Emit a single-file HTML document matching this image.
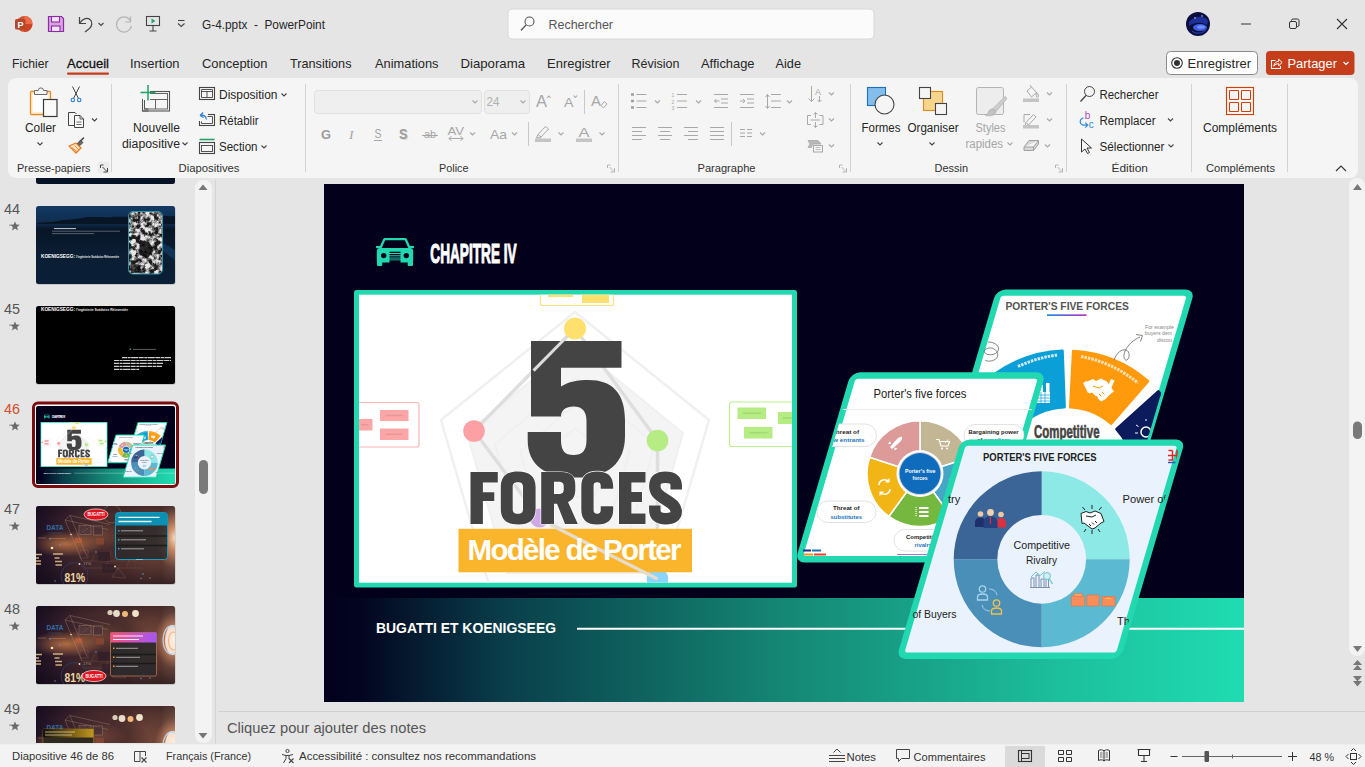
<!DOCTYPE html>
<html lang="fr"><head><meta charset="utf-8"><title>G-4.pptx - PowerPoint</title>
<style>
html,body{margin:0;padding:0;background:#e5e5e5;overflow:hidden}
body{width:1365px;height:767px;position:relative;font-family:"Liberation Sans",sans-serif}
svg{position:absolute;left:0;top:0;display:block}
text{font-family:"Liberation Sans",sans-serif;fill:#262626;font-size:12px}
.g{fill:#a6a6a6}
.lbl{font-size:11.5px;fill:#333}
.ic{fill:none;stroke:#444;stroke-width:1}
.icg{fill:none;stroke:#a8a8a8;stroke-width:1}
.chev{fill:none;stroke:#444;stroke-width:1.1}
.chevg{fill:none;stroke:#a8a8a8;stroke-width:1.1}
.div{stroke:#d2d2d2;stroke-width:1}
</style></head><body>
<svg width="1365" height="767" viewBox="0 0 1365 767">
<!-- chrome_bg -->
<rect x="0" y="0" width="1365" height="767" fill="#e5e5e5"/>
<!-- ribbon card -->
<rect x="8" y="78" width="1350" height="100" rx="8" ry="8" fill="#f5f5f5"/>
<!-- search box -->
<rect x="508" y="9" width="366" height="30" rx="4" fill="#fbfbfb" stroke="#d8d8d8" stroke-width="1"/>
<!-- left scrollbar track -->
<rect x="195" y="180" width="17" height="563" rx="8" fill="#f3f3f3"/>
<line x1="215.5" y1="180" x2="215.5" y2="745" stroke="#d4d4d4"/>
<!-- right scrollbar track -->
<rect x="1349" y="178" width="16" height="478" rx="8" fill="#f3f3f3"/>
<!-- notes separator -->
<line x1="218" y1="711.5" x2="1365" y2="711.5" stroke="#d0d0d0"/>
<!-- status bar -->
<rect x="0" y="744.300" width="1365" height="23" fill="#f3f3f3"/>

<!-- titlebar -->
<g id="titlebar">
<!-- powerpoint logo -->
<circle cx="24.5" cy="24" r="8" fill="#d35230"/>
<path d="M24.5 16 a8 8 0 0 1 8 8 h-8z" fill="#ed6c47"/>
<path d="M24.5 32 a8 8 0 0 0 8 -8 h-8z" fill="#c43e1c" opacity=".6"/>
<rect x="15" y="19" width="10.5" height="10.5" rx="1.5" fill="#b7472a"/>
<text x="17.6" y="28" style="font-size:9px;font-weight:bold;fill:#fff">P</text>
<!-- save -->
<path d="M48.5 16.5h13l2 2v13h-15z" fill="#d9a3e2" stroke="#8a2da5" stroke-width="1.2"/>
<rect x="51.5" y="16.5" width="8" height="5.5" fill="#f3e3f6" stroke="#8a2da5" stroke-width="1.1"/>
<rect x="51.5" y="26" width="8.5" height="5.5" fill="#f3e3f6" stroke="#8a2da5" stroke-width="1.1"/>
<!-- undo -->
<path d="M79.5 17v6.5h6.5" fill="none" stroke="#444" stroke-width="1.2"/>
<path d="M80 23c2-4 7-6 10-3.5c3 2.500 2 7-0.500 9l-4.500 3.500" fill="none" stroke="#444" stroke-width="1.2"/>
<path class="chev" d="M98.500 23l2.500 2.500 2.500-2.500"/>
<!-- redo (disabled) -->
<path d="M130.500 16.500v5.500h-5.500" fill="none" stroke="#b4b4b4" stroke-width="1.200"/>
<path d="M130.800 21.300A7.500 7.500 0 1 0 131.400 25.800" fill="none" stroke="#b4b4b4" stroke-width="1.200"/>
<!-- present -->
<rect x="146.500" y="16.500" width="13" height="9" fill="none" stroke="#444" stroke-width="1.1"/>
<path d="M151.500 18.500l4 2.500-4 2.500z" fill="#21a366"/>
<path d="M153 25.500v5.500M149.500 31h7" stroke="#444" stroke-width="1.1" fill="none"/>
<!-- customise -->
<path d="M178 20.500h6.500" stroke="#444" stroke-width="1.1"/>
<path class="chev" d="M178 23.500l3.250 3 3.250-3"/>
<text x="202" y="29" textLength="123" lengthAdjust="spacingAndGlyphs" style="white-space:pre;font-size:12.5px">G-4.pptx  -  PowerPoint</text>
<!-- search -->
<circle cx="529.500" cy="21.500" r="4.500" fill="none" stroke="#555" stroke-width="1.1"/>
<path d="M526 25l-5 5.500" stroke="#555" stroke-width="1.2"/>
<text x="548.500" y="28.500" textLength="64.500" lengthAdjust="spacingAndGlyphs" style="fill:#555;font-size:12.500px">Rechercher</text>
<!-- avatar -->
<circle cx="1198" cy="24" r="12" fill="#0b0f3c"/>
<path d="M1189 22c4-5 12-7 18-3c1 2 1 4 0 6c-5-3-12-3-18 1z" fill="#1c2f9a"/>
<ellipse cx="1200" cy="27.500" rx="7" ry="3.500" fill="#3d5fe0"/>
<ellipse cx="1201" cy="27" rx="4" ry="1.800" fill="#6f8cff"/>
<path d="M1192 31c3 3 10 3 14-1" stroke="#24349d" stroke-width="1.500" fill="none"/>
<circle cx="1195" cy="18" r=".8" fill="#cfd8ff"/><circle cx="1202" cy="16" r=".8" fill="#cfd8ff"/>
<!-- window controls -->
<path d="M1241 24h10" stroke="#333" stroke-width="1"/>
<rect x="1289.500" y="21.500" width="7" height="7" rx="1.500" fill="none" stroke="#333" stroke-width="1"/>
<path d="M1291.500 21.500v-1a1.500 1.500 0 0 1 1.500-1.500h4.500a1.500 1.500 0 0 1 1.500 1.500v4.500a1.500 1.500 0 0 1-1.500 1.500h-1" fill="none" stroke="#333" stroke-width="1"/>
<path d="M1337 19l10 10M1347 19l-10 10" stroke="#333" stroke-width="1.100"/>
</g>

<!-- tabs -->
<g id="tabs" style="font-size:13px">
<text x="12" y="67.700" textLength="36.500" lengthAdjust="spacingAndGlyphs" style="font-size:13px">Fichier</text>
<text x="67" y="67.700" textLength="42" lengthAdjust="spacingAndGlyphs" style="font-size:13px;fill:#111;stroke:#111;stroke-width:.3">Accueil</text>
<rect x="67" y="72.500" width="42" height="2.200" rx="1" fill="#c43e1c"/>
<text x="130" y="67.700" textLength="49.500" lengthAdjust="spacingAndGlyphs" style="font-size:13px">Insertion</text>
<text x="202" y="67.700" textLength="65.500" lengthAdjust="spacingAndGlyphs" style="font-size:13px">Conception</text>
<text x="290" y="67.700" textLength="61.500" lengthAdjust="spacingAndGlyphs" style="font-size:13px">Transitions</text>
<text x="375" y="67.700" textLength="63.500" lengthAdjust="spacingAndGlyphs" style="font-size:13px">Animations</text>
<text x="460.500" y="67.700" textLength="64.500" lengthAdjust="spacingAndGlyphs" style="font-size:13px">Diaporama</text>
<text x="547" y="67.700" textLength="63.500" lengthAdjust="spacingAndGlyphs" style="font-size:13px">Enregistrer</text>
<text x="631.500" y="67.700" textLength="48" lengthAdjust="spacingAndGlyphs" style="font-size:13px">Révision</text>
<text x="701" y="67.700" textLength="53.500" lengthAdjust="spacingAndGlyphs" style="font-size:13px">Affichage</text>
<text x="775.500" y="67.700" textLength="25.500" lengthAdjust="spacingAndGlyphs" style="font-size:13px">Aide</text>
<!-- Enregistrer button -->
<rect x="1166.500" y="51.500" width="91" height="23" rx="4" fill="#fdfdfd" stroke="#8a8a8a" stroke-width="1"/>
<circle cx="1177" cy="63" r="5.300" fill="none" stroke="#333" stroke-width="1.100"/>
<circle cx="1177" cy="63" r="3" fill="#333"/>
<text x="1187.500" y="67.700" textLength="63.500" lengthAdjust="spacingAndGlyphs" style="font-size:13px">Enregistrer</text>
<!-- Partager button -->
<rect x="1266" y="51" width="88.500" height="24" rx="4" fill="#c43e1c"/>
<path d="M1275.500 60.500h-4v8h9v-2.500" fill="none" stroke="#fff" stroke-width="1.100"/>
<path d="M1273.800 66.200c.4-3.200 2.400-4.900 4.900-4.900v-2.100l3.400 3.300-3.400 3.300v-2.100c-2.100 0-3.600.600-4.900 2.500z" fill="none" stroke="#fff" stroke-width="1" stroke-linejoin="round"/>
<text x="1287.500" y="67.700" textLength="49.500" lengthAdjust="spacingAndGlyphs" style="font-size:13px;fill:#fff">Partager</text>
<path d="M1343.500 62l2.500 2.500 2.500-2.500" fill="none" stroke="#fff" stroke-width="1.200"/>
</g>

<!-- ribbon -->
<g id="ribbon">
<!-- group dividers -->
<path class="div" d="M111.500 84v88M305.500 84v88M618.500 84v88M850.500 84v88M1066.500 84v88M1191.500 84v88M1287.500 84v88"/>
<!-- ===== Presse-papiers ===== -->
<!-- paste icon -->
<rect x="30.500" y="91.500" width="20" height="23" rx="1" fill="#fdfdfd" stroke="#e8891c" stroke-width="1.300"/>
<rect x="31.900" y="92.900" width="17.200" height="20.200" fill="none" stroke="#fbdcae" stroke-width="1.100"/>
<path d="M34.500 94.500v-4h3.800a2.600 2.600 0 0 1 5.200 0h3.500v4z" fill="#f5f5f5" stroke="#6a6a6a" stroke-width="1"/>
<rect x="43.500" y="99.500" width="13.500" height="17" fill="#fafafa" stroke="#3a3a3a" stroke-width="1.200"/>
<text x="25" y="132" textLength="31" lengthAdjust="spacingAndGlyphs">Coller</text>
<path class="chev" d="M37.500 142.500l2.500 2.500 2.500-2.500"/>
<!-- cut -->
<path d="M72.500 86.500l6 12M79.500 86.500l-6 12" stroke="#444" stroke-width="1" fill="none"/>
<circle cx="72.800" cy="100" r="1.700" fill="none" stroke="#2b7cd3" stroke-width="1.100"/>
<circle cx="79.200" cy="100" r="1.700" fill="none" stroke="#2b7cd3" stroke-width="1.100"/>
<!-- copy -->
<path d="M74.500 125.500h-6v-13h6.500l1.500 1.500" fill="none" stroke="#444" stroke-width="1"/>
<path d="M74.500 115.500h5.500l3.500 3.500v8.500h-9z" fill="#f7f7f7" stroke="#444" stroke-width="1"/>
<path d="M80 115.500v3.500h3.500" fill="none" stroke="#444" stroke-width=".9"/>
<path d="M76.500 122h5M76.500 124.500h5" stroke="#444" stroke-width=".8"/>
<path class="chev" d="M92 118.500l2.500 2.500 2.500-2.500"/>
<!-- format painter -->
<path d="M69 146l7-3 5 5-5 5z" fill="#fbe3c4" stroke="#e8791c" stroke-width="1.200" stroke-linejoin="round"/>
<path d="M72 147.500l5 4M74.500 145.500l4.500 4.500" stroke="#e8791c" stroke-width=".8"/>
<path d="M77.500 143.500l3-3.500 2.500 2.500-3 3z" fill="#666" stroke="#444" stroke-width=".8"/>
<path d="M81 140.500l2.500-2.500" stroke="#444" stroke-width="1.600" stroke-linecap="round"/>
<text class="lbl" x="17" y="172" textLength="73.500" lengthAdjust="spacingAndGlyphs">Presse-papiers</text>
<rect x="97.500" y="161.500" width="12" height="12" rx="2" fill="#ececec"/>
<path d="M100.500 168v-3h3M102.500 167l4.500 4.500M107.500 168v4h-4" fill="none" stroke="#444" stroke-width="1"/>
<!-- ===== Diapositives ===== -->
<rect x="142.500" y="91.500" width="27" height="19.500" fill="#f5f5f5" stroke="#555" stroke-width="1.100"/>
<rect x="144.500" y="93.500" width="23" height="15.500" fill="none" stroke="#555" stroke-width=".9"/>
<path d="M144.500 99.500h23M155.500 99.500v9.500" stroke="#555" stroke-width=".9"/>
<rect x="140" y="84" width="10" height="17" fill="#f5f5f5"/>
<path d="M148 85v15.500M140.500 92.500h15" stroke="#21a366" stroke-width="1.500"/>
<path d="M142.500 99v12h6M144.500 100v9h4" stroke="#555" stroke-width="1" fill="none"/>
<text x="133" y="132" textLength="47" lengthAdjust="spacingAndGlyphs">Nouvelle</text>
<text x="122" y="148" textLength="58" lengthAdjust="spacingAndGlyphs">diapositive</text>
<path class="chev" d="M182.500 142.500l2.500 2.500 2.500-2.500"/>
<!-- Disposition icon -->
<rect x="199.500" y="87.500" width="15" height="12" fill="none" stroke="#444" stroke-width="1.100"/>
<path d="M201.500 91.500h11M201.500 89.500h11v8h-11zM207 91.500v6" fill="none" stroke="#444" stroke-width=".9"/>
<text x="219" y="99" textLength="58.500" lengthAdjust="spacingAndGlyphs">Disposition</text>
<path class="chev" d="M281.500 93.500l2.500 2.500 2.500-2.500"/>
<!-- Retablir icon -->
<rect x="199.500" y="114.500" width="15" height="11" fill="none" stroke="#444" stroke-width="1.100"/>
<rect x="198" y="112" width="10" height="9" fill="#f5f5f5"/>
<path d="M207.500 116.500h5v7h-11v-2" fill="none" stroke="#444" stroke-width=".9"/>
<path d="M200 115.500c3-1 6 0 6.500 4M200 115.500l3.200-3M200 115.500l3.600 2" fill="none" stroke="#2b7cd3" stroke-width="1.200"/>
<text x="219" y="125" textLength="39.500" lengthAdjust="spacingAndGlyphs">Rétablir</text>
<!-- Section icon -->
<path d="M199.500 139.500h15" stroke="#21a366" stroke-width="1.600"/>
<rect x="199.500" y="142.500" width="15" height="11" fill="none" stroke="#444" stroke-width="1.100"/>
<rect x="201.500" y="145.500" width="11" height="6" fill="none" stroke="#444" stroke-width=".9"/>
<text x="219" y="151" textLength="38.500" lengthAdjust="spacingAndGlyphs">Section</text>
<path class="chev" d="M261.500 145.500l2.500 2.500 2.500-2.500"/>
<text class="lbl" x="178.500" y="172" textLength="61" lengthAdjust="spacingAndGlyphs">Diapositives</text>
<!-- ===== Police ===== -->
<rect x="314.500" y="90.500" width="167" height="23" rx="3.500" fill="#efefef" stroke="#e0e0e0"/>
<rect x="484.500" y="90.500" width="45" height="23" rx="3.500" fill="#efefef" stroke="#e0e0e0"/>
<path class="chevg" d="M472.500 100.500l2.500 2.500 2.500-2.500"/>
<path class="chevg" d="M520.500 100.500l2.500 2.500 2.500-2.500"/>
<text x="486.500" y="106" textLength="13" lengthAdjust="spacingAndGlyphs" class="g" style="fill:#b0b0b0">24</text>
<!-- A^ A v -->
<text x="536" y="107" class="g" style="font-size:16px" textLength="11" lengthAdjust="spacingAndGlyphs">A</text>
<path class="chevg" d="M547 98l1.800-2 1.800 2"/>
<text x="564" y="107" class="g" style="font-size:13.500px" textLength="9.500" lengthAdjust="spacingAndGlyphs">A</text>
<path class="chevg" d="M573.500 95.500l1.800 2 1.800-2"/>
<path d="M584.500 90v24" stroke="#c8c8c8"/>
<text x="591" y="106" class="g" style="font-size:15px" textLength="10" lengthAdjust="spacingAndGlyphs">A</text>
<path d="M601 105.500l3.500-4 2.500 2.500-3.500 4z" fill="#f5f5f5" stroke="#a8a8a8" stroke-width="1"/>
<!-- row 2 -->
<text x="321" y="138.500" class="g" style="font-size:13.500px;font-weight:bold;fill:#9c9c9c" textLength="10" lengthAdjust="spacingAndGlyphs">G</text>
<text x="349" y="138.500" class="g" style="font-size:13.500px;font-style:italic;font-family:'Liberation Serif',serif" >I</text>
<text x="374.500" y="138" class="g" style="font-size:13px" textLength="7" lengthAdjust="spacingAndGlyphs">S</text>
<path d="M374 140.500h8" stroke="#a6a6a6" stroke-width="1"/>
<text x="400" y="139.500" style="font-size:14px;font-weight:bold;fill:#d8d8d8" textLength="8.500" lengthAdjust="spacingAndGlyphs">S</text>
<text x="399" y="138.500" style="font-size:14px;font-weight:bold;fill:#9c9c9c" textLength="8.500" lengthAdjust="spacingAndGlyphs">S</text>
<text x="424" y="138" class="g" style="font-size:11.500px" textLength="12" lengthAdjust="spacingAndGlyphs">ab</text>
<path d="M422 135.500h16" stroke="#a6a6a6" stroke-width="1"/>
<text x="447.500" y="135" class="g" style="font-size:11.500px" textLength="16.500" lengthAdjust="spacingAndGlyphs">AV</text>
<path d="M449 138.500h14M451.500 136l-2.500 2.500 2.500 2.500M460.500 136l2.500 2.500-2.500 2.500" class="icg"/>
<path class="chevg" d="M470 132.500l2.500 2.500 2.500-2.500"/>
<text x="490" y="138.500" class="g" style="font-size:13.500px" textLength="17" lengthAdjust="spacingAndGlyphs">Aa</text>
<path class="chevg" d="M512 132.500l2.500 2.500 2.500-2.500"/>
<path d="M528.500 122v24" stroke="#c8c8c8"/>
<!-- highlighter -->
<path d="M538 134.500l7.500-8 3 2.500-7.500 8zM538 134.500l-1.500 3.500 4.500-.5" fill="none" stroke="#a8a8a8" stroke-width="1"/>
<rect x="535" y="138.500" width="16" height="3.500" fill="#c4c4c4"/>
<path class="chevg" d="M558.500 132.500l2.500 2.500 2.500-2.500"/>
<text x="578.500" y="137" class="g" style="font-size:13.500px" textLength="11" lengthAdjust="spacingAndGlyphs">A</text>
<rect x="576" y="138.500" width="16" height="3.500" fill="#c4c4c4"/>
<path class="chevg" d="M599.500 132.500l2.500 2.500 2.500-2.500"/>
<text class="lbl" x="439" y="172" textLength="29.500" lengthAdjust="spacingAndGlyphs">Police</text>
<path d="M607.500 168v-3h3M609.500 167l4.500 4.500M614.500 168v4h-4" fill="none" stroke="#b4b4b4" stroke-width="1"/>
<!-- ===== Paragraphe ===== -->
<!-- bullets -->
<path d="M631 94.500h3M631 101h3M631 107.500h3" stroke="#a0a0a0" stroke-width="2.400"/>
<path d="M636.500 94.500h10M636.500 101h10M636.500 107.500h10" class="icg"/>
<path class="chevg" d="M655 100.500l2.500 2.500 2.500-2.500"/>
<!-- numbering -->
<text x="671.500" y="97" style="font-size:5px;fill:#a8a8a8">1</text>
<text x="671.500" y="103.500" style="font-size:5px;fill:#a8a8a8">2</text>
<text x="671.500" y="110" style="font-size:5px;fill:#a8a8a8">3</text>
<path d="M677 94.500h10M677 101h10M677 107.500h10" class="icg"/>
<path class="chevg" d="M696 100.500l2.500 2.500 2.500-2.500"/>
<!-- dec indent -->
<path d="M714 94.500h14M721 99h7M721 103h7M714 107.500h14M714.500 101h5M716.500 99l-2 2 2 2" class="icg"/>
<!-- inc indent -->
<path d="M740 94.500h14M747 99h7M747 103h7M740 107.500h14M740 101h5M743 99l2 2-2 2" class="icg"/>
<!-- line spacing -->
<path d="M771 94.500h10M771 101h10M771 107.500h10M767.500 95v13M765.500 97l2-2.500 2 2.500M765.500 106l2 2.500 2-2.500" class="icg"/>
<path class="chevg" d="M787 100.500l2.500 2.500 2.500-2.500"/>
<!-- text direction -->
<path d="M811.500 86v15.500M808.500 98.500l3 3 3-3M819.500 96v6M817.500 100l2 2 2-2" class="icg"/>
<text x="815" y="94.500" style="font-size:9px;fill:#a8a8a8">A</text>
<path class="chevg" d="M829 92.500l2.500 2.500 2.500-2.500"/>
<!-- align text -->
<path d="M811 115.500h-3.500v9h3.500M819.500 115.500h3.500v9h-3.500" class="icg"/>
<path d="M810.500 120h9.500M815.500 118v-5.500M813.500 114.500l2-2 2 2M815.500 122v5.500M813.500 125.500l2 2 2-2" class="icg"/>
<path class="chevg" d="M829 118.500l2.500 2.500 2.500-2.500"/>
<!-- smartart -->
<path d="M808 140.500h10l3 3.500h-8.500l-1 3.500h-3.500l2-3.500z" fill="#b8b8b8" stroke="#a8a8a8" stroke-width=".8"/>
<rect x="813.500" y="145.500" width="9" height="6.500" fill="#f5f5f5" stroke="#a8a8a8" stroke-width="1"/>
<path d="M815.500 147.500h5M815.500 149.500h5" stroke="#a8a8a8" stroke-width=".7"/>
<path class="chevg" d="M829 144.500l2.500 2.500 2.500-2.500"/>
<!-- align row -->
<path d="M632 127.500h14M632 131.500h10M632 135.500h14M632 139.500h10" class="icg"/>
<path d="M658 127.500h14M660 131.500h10M658 135.500h14M660 139.500h10" class="icg"/>
<path d="M684 127.500h14M688 131.500h10M684 135.500h14M688 139.500h10" class="icg"/>
<path d="M710 127.500h14M710 131.500h14M710 135.500h14M710 139.500h14" class="icg"/>
<path d="M731.500 122v24" stroke="#c8c8c8"/>
<path d="M740 129.500h5M747 129.500h5M740 133h5M747 133h5M740 136.500h5M747 136.500h5" class="icg"/>
<path class="chevg" d="M760 132.500l2.500 2.500 2.500-2.500"/>
<text class="lbl" x="697.500" y="172" textLength="58" lengthAdjust="spacingAndGlyphs">Paragraphe</text>
<path d="M839.500 168v-3h3M841.500 167l4.500 4.500M846.500 168v4h-4" fill="none" stroke="#b4b4b4" stroke-width="1"/>
<!-- ===== Dessin ===== -->
<rect x="867.500" y="87.500" width="18" height="18" fill="#83beec" stroke="#1e6fc0" stroke-width="1.100"/>
<circle cx="884.500" cy="104.500" r="9.500" fill="#f5f5f5" stroke="#444" stroke-width="1.100"/>
<text x="861.500" y="132" textLength="39" lengthAdjust="spacingAndGlyphs">Formes</text>
<path class="chev" d="M877.500 142.500l2.500 2.500 2.500-2.500"/>
<!-- organiser -->
<rect x="923.500" y="91.500" width="19" height="19" fill="#f8d58c" stroke="#e28a1c" stroke-width="1.100"/>
<rect x="919.500" y="87.500" width="11" height="11" fill="#f5f5f5" stroke="#444" stroke-width="1.100"/>
<rect x="935.500" y="103.500" width="11" height="11" fill="#f5f5f5" stroke="#444" stroke-width="1.100"/>
<text x="907.500" y="132" textLength="51" lengthAdjust="spacingAndGlyphs">Organiser</text>
<path class="chev" d="M929.500 142.500l2.500 2.500 2.500-2.500"/>
<!-- styles rapides -->
<rect x="976.500" y="87.500" width="27" height="27" rx="2" fill="#ededed" stroke="#b4b4b4" stroke-width="1"/>
<path d="M1005 96.500c1.200.4 1.800 1.400 1.500 2.500l-10.500 12.500-3.500-2.500z" fill="#cdcdcd" stroke="#b0b0b0" stroke-width=".8" stroke-linejoin="round"/>
<path d="M992.500 109l3.500 2.500c-.5 2.500-2.500 4-5 4.200c-2 .2-4 .300-6-.700c2-.5 3-1.500 3.500-3c.5-1.800 2-3 4-3z" fill="#c2c2c2" stroke="#b0b0b0" stroke-width=".8" stroke-linejoin="round"/>
<text x="975.500" y="132" class="g" textLength="30" lengthAdjust="spacingAndGlyphs">Styles</text>
<text x="965.500" y="148" class="g" textLength="37.500" lengthAdjust="spacingAndGlyphs">rapides</text>
<path class="chevg" d="M1007.500 142.500l2.500 2.500 2.500-2.500"/>
<!-- fill / outline / effects -->
<path d="M1027 91l4.500-4 5 5.500-5 4.500zM1031.500 87l-1.500-2M1036.500 92.500c2 2 2.500 3.500 1.500 4.500s-2.500 0-1.500-4.500" class="icg"/>
<rect x="1023" y="98.500" width="16" height="3.500" fill="#c4c4c4"/>
<path class="chevg" d="M1047 92.500l2.500 2.500 2.500-2.500"/>
<path d="M1026 122.500l7.500-8 2.500 2.500-7.500 8zM1026 122.500l-1 3.500 3.500-1M1024 114.500h6M1024 114.500v8" class="icg"/>
<rect x="1023" y="125" width="16" height="3.500" fill="#c4c4c4"/>
<path class="chevg" d="M1047 118.500l2.500 2.500 2.500-2.500"/>
<path d="M1024 147l5-6.500h9.500l-5 6.500zM1024 147v3.500h9.500l5-6.500v-3.500M1033.500 147v3.500" fill="#d8d8d8" stroke="#a0a0a0" stroke-width="1" stroke-linejoin="round"/>
<path class="chevg" d="M1045 144.500l2.500 2.500 2.500-2.500"/>
<text class="lbl" x="934.500" y="172" textLength="33.500" lengthAdjust="spacingAndGlyphs">Dessin</text>
<path d="M1055.500 168v-3h3M1057.500 167l4.500 4.500M1062.500 168v4h-4" fill="none" stroke="#b4b4b4" stroke-width="1"/>
<!-- ===== Edition ===== -->
<circle cx="1089.500" cy="91.500" r="5" class="ic" stroke-width="1.100"/>
<path d="M1086 95.500l-5.500 6" stroke="#444" stroke-width="1.300"/>
<text x="1099.500" y="99" textLength="59" lengthAdjust="spacingAndGlyphs">Rechercher</text>
<text x="1084.800" y="119.300" style="font-size:10px;fill:#b146c2">b</text>
<text x="1088.800" y="127.800" style="font-size:10px;fill:#2b8ad8">c</text>
<path d="M1083.500 117.800c-4 1.200-4.500 5.700-.8 7.300h5M1085.300 122.600l2.500 2.500-2.500 2.500" fill="none" stroke="#2b8ad8" stroke-width="1.100"/>
<text x="1099.500" y="125" textLength="56" lengthAdjust="spacingAndGlyphs">Remplacer</text>
<path class="chev" d="M1168 118.500l2.500 2.500 2.500-2.500"/>
<path d="M1081.500 139v13l3.500-3 2.500 4.500 2-1-2.500-4.500h4.500z" fill="#f5f5f5" stroke="#333" stroke-width="1" stroke-linejoin="round"/>
<text x="1099.500" y="151" textLength="65" lengthAdjust="spacingAndGlyphs">Sélectionner</text>
<path class="chev" d="M1168.500 144.500l2.500 2.500 2.500-2.500"/>
<text class="lbl" x="1111.500" y="172" textLength="36.500" lengthAdjust="spacingAndGlyphs">Édition</text>
<!-- ===== Complements ===== -->
<rect x="1226.500" y="87.500" width="27" height="27" fill="none" stroke="#d83b01" stroke-width="1.100"/>
<path d="M1229.500 90.500h9v9h-9zM1241.500 90.500h9v9h-9zM1229.500 102.500h9v9h-9zM1241.500 102.500h9v9h-9z" fill="none" stroke="#d83b01" stroke-width="1"/>
<text x="1203" y="132" textLength="74" lengthAdjust="spacingAndGlyphs">Compléments</text>
<text class="lbl" x="1206" y="172" textLength="69" lengthAdjust="spacingAndGlyphs">Compléments</text>
<path d="M1336 171l5-5 5 5" fill="none" stroke="#333" stroke-width="1.100"/>
</g>

<!-- thumbs -->
<g id="thumbs">
<defs>
<clipPath id="tpane"><rect x="0" y="178" width="195" height="565"/></clipPath>
<linearGradient id="t44" x1="0" y1="0" x2="0" y2="1"><stop offset="0" stop-color="#143a63"/><stop offset=".22" stop-color="#0f2c4d"/><stop offset=".3" stop-color="#081627"/><stop offset=".6" stop-color="#0a1d33"/><stop offset="1" stop-color="#0a2036"/></linearGradient>
<linearGradient id="t47" x1="0" y1="0" x2="1" y2="0"><stop offset="0" stop-color="#24152a"/><stop offset=".3" stop-color="#3e252b"/><stop offset=".65" stop-color="#4d2f2d"/><stop offset=".9" stop-color="#7c4d3d"/><stop offset="1" stop-color="#c48a68"/></linearGradient>
<radialGradient id="glow" cx=".5" cy=".5" r=".5"><stop offset="0" stop-color="#fff2e0" stop-opacity=".95"/><stop offset=".35" stop-color="#f3a878" stop-opacity=".7"/><stop offset="1" stop-color="#c07a5c" stop-opacity="0"/></radialGradient>
<radialGradient id="glow2" cx=".5" cy=".5" r=".5"><stop offset="0" stop-color="#ffb070" stop-opacity=".55"/><stop offset="1" stop-color="#ffb070" stop-opacity="0"/></radialGradient>
<radialGradient id="vig" cx=".47" cy=".45" r=".78"><stop offset=".45" stop-color="#0c0612" stop-opacity="0"/><stop offset="1" stop-color="#0c0612" stop-opacity=".8"/></radialGradient>
<radialGradient id="og" cx=".5" cy=".5" r=".5"><stop offset="0" stop-color="#ff9c52" stop-opacity=".6"/><stop offset="1" stop-color="#ff9c52" stop-opacity="0"/></radialGradient>
<linearGradient id="gold" x1="0" x2="1"><stop offset="0" stop-color="#15110a"/><stop offset=".5" stop-color="#6e5414"/><stop offset="1" stop-color="#c0961e"/></linearGradient>
<linearGradient id="pk" x1="0" x2="1"><stop offset="0" stop-color="#f2527c"/><stop offset="1" stop-color="#a457f5"/></linearGradient>
<clipPath id="c47"><rect x="36" y="506" width="139" height="78" rx="2.500"/></clipPath>
<clipPath id="c48"><rect x="36" y="606" width="139" height="78" rx="2.500"/></clipPath>
<clipPath id="c49"><rect x="36" y="706" width="139" height="78" rx="2.500"/></clipPath>
<clipPath id="c46"><rect x="36" y="406" width="139" height="78" rx="2"/></clipPath>
<filter id="noise" x="0" y="0" width="1" height="1"><feTurbulence type="fractalNoise" baseFrequency=".22" numOctaves="3" seed="7" result="n"/><feColorMatrix in="n" type="matrix" values="0 0 0 0 0  0 0 0 0 0  0 0 0 0 0  2.6 2.6 0 0 -2.1" result="a"/><feFlood flood-color="#e8e8e8"/><feComposite in2="a" operator="in"/></filter>
<clipPath id="phone"><rect x="128.500" y="211.500" width="34" height="62.500" rx="4.500"/></clipPath>
<g id="techbg">
<rect x="0" y="0" width="139" height="78" fill="url(#t47)"/>
<ellipse cx="30" cy="38" rx="38" ry="13" fill="url(#og)"/>
<ellipse cx="62" cy="30" rx="30" ry="14" fill="url(#og)" opacity=".35"/>
<rect x="0" y="0" width="139" height="78" fill="url(#vig)"/>
<path d="M29 14l5-4.500 40 9M29 14l17 41M34 9.500l17 41M29 14l43 9.500" fill="none" stroke="#b89a80" stroke-width=".6" opacity=".55"/>
<path d="M46 55h55M60 45l-6 14M75 45l-5 16M95 47l-4 14M46 62h60" fill="none" stroke="#a08068" stroke-width=".4" opacity=".45"/>
<rect x="43" y="19.500" width="12" height="9" fill="#4a3238" stroke="#b89a80" stroke-width=".4" opacity=".85"/><rect x="57.500" y="20" width="9" height="9" fill="#4a3238" stroke="#b89a80" stroke-width=".4" opacity=".85"/>
<path d="M44 21l10 7M44 24l7 4.500M47 20l8 6M44 28l11-8" stroke="#8a6c68" stroke-width=".4" opacity=".8"/>
<rect x="60" y="32" width="8" height="6.500" fill="#8a4a30" opacity=".75"/><rect x="39" y="32" width="7" height="5" fill="#c8603a" opacity=".6"/>
<rect x="62" y="46" width="12" height="9" fill="#2c1c26" opacity=".7"/><rect x="66" y="58" width="14" height="9" fill="#2c1c26" opacity=".6"/>
<path d="M44 44h8v8h-8zM76 71l6-9 8 10z" fill="none" stroke="#a08068" stroke-width=".4" opacity=".6"/>
<path d="M0 48.500h6M0 52h3M0 55h5M0 58h5" stroke="#e6c48c" stroke-width="1.500" opacity=".85"/>
<path d="M17 48h10M18.500 52h5M19 55.500h7M19.500 59h6.500" stroke="#e6c48c" stroke-width="1.600" opacity=".85"/>
<circle cx="38.500" cy="70" r="13.500" fill="none" stroke="#2c3f70" stroke-width=".9" opacity=".9"/><circle cx="38.500" cy="70" r="11" fill="#3a2228" opacity=".5"/>
<text x="28.600" y="75.600" textLength="20.600" lengthAdjust="spacingAndGlyphs" style="font-size:13.500px;font-weight:bold;fill:#efd8a4">81%</text>
<text x="10.400" y="24" textLength="17" lengthAdjust="spacingAndGlyphs" style="font-size:6.500px;font-weight:bold;fill:#2f6ea6">DATA</text>
<path d="M12 27h14" stroke="#2f6ea6" stroke-width=".5" opacity=".6"/>
<path d="M2 32h8M13 32.500h17" stroke="#c88a5a" stroke-width=".8" opacity=".55"/>
<circle cx="16" cy="42" r="1.300" fill="#ffe2b0"/><circle cx="43.500" cy="58" r=".9" fill="#ffe2b0"/><circle cx="35" cy="28.500" r=".8" fill="#ffe2b0"/><circle cx="79" cy="60.500" r=".9" fill="#ffe2b0"/>
<circle cx="24" cy="39" r=".8" fill="#5f9cc8"/><circle cx="14" cy="33" r=".7" fill="#5f9cc8"/><circle cx="107" cy="68" r=".8" fill="#5f9cc8"/><circle cx="105" cy="72.500" r=".7" fill="#5f9cc8"/><circle cx="114" cy="72" r=".7" fill="#5f9cc8"/><circle cx="19" cy="75" r=".7" fill="#5f9cc8"/><circle cx="60" cy="46" r=".7" fill="#5f9cc8"/>
<text x="47" y="59" style="font-size:4px;fill:#c8b090;opacity:.7">17%</text>
</g>
<g id="bugatti"><ellipse cx="0" cy="0" rx="12" ry="5.600" fill="#e0141e" stroke="#f6f0f0" stroke-width=".7"/><text x="-8.500" y="1.800" textLength="17" lengthAdjust="spacingAndGlyphs" style="font-size:5px;font-weight:bold;fill:#fff">BUGATTI</text></g>
<g id="star"><path d="M0 -4.600l1.300 3.200 3.500.2-2.700 2.200.9 3.400-3-1.900-3 1.900.9-3.400-2.700-2.200 3.500-.2z" fill="#6a6a6a"/><path d="M-5.800 -.800h1.400" stroke="#6a6a6a" stroke-width=".9"/></g>
</defs>
<g clip-path="url(#tpane)">
<!-- numbers -->
<g style="font-size:15.500px">
<text x="4" y="214.200" textLength="16" lengthAdjust="spacingAndGlyphs" style="font-size:15.500px;fill:#555">44</text>
<text x="4" y="314.200" textLength="16" lengthAdjust="spacingAndGlyphs" style="font-size:15.500px;fill:#555">45</text>
<text x="4" y="414.200" textLength="16" lengthAdjust="spacingAndGlyphs" style="font-size:15.500px;fill:#d14f2b">46</text>
<text x="4" y="514.200" textLength="16" lengthAdjust="spacingAndGlyphs" style="font-size:15.500px;fill:#555">47</text>
<text x="4" y="614.200" textLength="16" lengthAdjust="spacingAndGlyphs" style="font-size:15.500px;fill:#555">48</text>
<text x="4" y="714.200" textLength="16" lengthAdjust="spacingAndGlyphs" style="font-size:15.500px;fill:#555">49</text>
</g>
<use href="#star" x="15" y="226"/><use href="#star" x="15" y="326"/><use href="#star" x="15" y="426"/><use href="#star" x="15" y="526"/><use href="#star" x="15" y="626"/><use href="#star" x="15" y="726"/>
<!-- 43 (partial) -->
<rect x="36" y="150" width="139" height="34" rx="2.500" fill="#061226"/>
<!-- 44 -->
<rect x="36.500" y="206.800" width="139" height="78" rx="2.500" fill="#000" opacity=".18"/>
<rect x="36" y="206" width="139" height="78" rx="2.500" fill="url(#t44)"/>
<path d="M36 224c8-3 14-1 22-3s16-1 24-3 20 0 30-1 20 1 30-1 22 1 33 0v8h-139z" fill="#071321" opacity=".9"/>
<path d="M150 236l25 14v10l-30-22z" fill="#1a4a7a" opacity=".5"/>
<rect x="128.500" y="211.500" width="34" height="62.500" rx="4.500" fill="#1b1b1b"/>
<g clip-path="url(#phone)"><rect x="128" y="211" width="35" height="64" filter="url(#noise)"/><path d="M140 240l9 2 5 8-6 8-9-4z" fill="#0c0c0c" opacity=".85"/><path d="M131 262l8 3 3 8h-11z" fill="#0c0c0c" opacity=".7"/></g>
<rect x="128.500" y="211.500" width="34" height="62.500" rx="4.500" fill="none" stroke="#2f93a6" stroke-width="1"/>
<text x="41" y="257.800" textLength="34" lengthAdjust="spacingAndGlyphs" style="font-size:5.200px;font-weight:bold;fill:#fff">KOENIGSEGG:</text>
<text x="76" y="257.500" textLength="43" lengthAdjust="spacingAndGlyphs" style="font-size:3.600px;font-weight:bold;fill:#e8e8e8">l'ingénierie Suédoise Réinventée</text>
<path d="M54 228.600h22" stroke="#fff" stroke-width=".9" opacity=".85"/><path d="M52 231.200h68M52 233.600h42" stroke="#c8d2de" stroke-width=".6" opacity=".65"/>
<!-- 45 -->
<rect x="36.500" y="306.800" width="139" height="78" rx="2.500" fill="#000" opacity=".18"/>
<rect x="36" y="306" width="139" height="78" rx="2.500" fill="#000"/>
<text x="41" y="310.800" textLength="34" lengthAdjust="spacingAndGlyphs" style="font-size:5.200px;font-weight:bold;fill:#fff">KOENIGSEGG:</text>
<text x="76" y="310.500" textLength="52" lengthAdjust="spacingAndGlyphs" style="font-size:3.600px;font-weight:bold;fill:#e8e8e8">l'ingénierie Suédoise Réinventée</text>
<circle cx="130.300" cy="349.300" r=".8" fill="#3fbf7a"/><path d="M133 349.400h23" stroke="#9a9a9a" stroke-width=".6"/>
<path d="M122 357.600h49M114 360.500h57M114 363.400h49M114 366.300h48M114 369.300h25" stroke="#f4f4f4" stroke-width="1.200" opacity=".85" stroke-dasharray="5 .6 3 .5 7 .6"/>
<!-- 46 selected -->
<rect x="33.500" y="403" width="144" height="83.500" rx="4.500" fill="#fff" stroke="#7a0d10" stroke-width="3"/>
<g clip-path="url(#c46)"><use href="#slidecontent" transform="translate(36,406) scale(.15109) translate(-324,-184)"/></g>
<!-- 47 -->
<rect x="36.500" y="506.800" width="139" height="78" rx="2.500" fill="#000" opacity=".18"/>
<g clip-path="url(#c47)"><use href="#techbg" x="36" y="506"/>
<ellipse cx="176" cy="538" rx="22" ry="30" fill="url(#glow)"/>
<circle cx="112" cy="514" r="9" fill="none" stroke="#c8a888" stroke-width=".5" opacity=".6"/>
<use href="#bugatti" x="96" y="514.500"/>
<rect x="115.500" y="512.500" width="52" height="47" rx="3" fill="#2a2a2c" fill-opacity=".82" stroke="#1f9cbc" stroke-width="1"/>
<path d="M118.500 512.500h46a3 3 0 0 1 3 3v10h-52v-10a3 3 0 0 1 3-3z" fill="#0d8fb2"/>
<path d="M118.500 517.300h41M118.500 521.500h33" stroke="#e8f6fa" stroke-width="1.300"/>
<path d="M116 536h51M116 545.500h51" stroke="#1b1b1c" stroke-width="1.500"/>
<rect x="118" y="530" width="1.500" height="1.500" fill="#35a9d0"/><rect x="118" y="539" width="1.500" height="1.500" fill="#35a9d0"/><rect x="118" y="548" width="1.500" height="1.500" fill="#35a9d0"/>
<path d="M121 530.800h22M121 539.800h25M121 548.800h23" stroke="#bdbdbd" stroke-width=".8"/>
<path d="M136 559.500h7" stroke="#5fd0e8" stroke-width="1.200"/>
</g>
<!-- 48 -->
<rect x="36.500" y="606.800" width="139" height="78" rx="2.500" fill="#000" opacity=".18"/>
<g clip-path="url(#c48)"><use href="#techbg" x="36" y="606"/>
<ellipse cx="174" cy="640" rx="20" ry="28" fill="url(#glow)"/>
<ellipse cx="173" cy="640" rx="8" ry="15" fill="#fff1e2" opacity=".85"/><ellipse cx="171.500" cy="640" rx="8.500" ry="14" fill="none" stroke="#b9d8f2" stroke-width="1.300" opacity=".9"/><ellipse cx="173.500" cy="641" rx="5" ry="9" fill="none" stroke="#f2b48c" stroke-width="1.200" opacity=".9"/>
<circle cx="110" cy="612.500" r="2.600" fill="#d8cbb8"/><circle cx="116.500" cy="613.500" r="3.400" fill="#e8dccb"/><circle cx="125" cy="614" r="3" fill="#f0b878"/><circle cx="135.500" cy="613.500" r="3.400" fill="#efe3c8"/>
<rect x="110.500" y="632.500" width="46" height="43.500" rx="1.500" fill="#29292b" fill-opacity=".85" stroke="#c97f55" stroke-width=".7"/>
<rect x="110.500" y="632.500" width="46" height="10" fill="url(#pk)"/>
<path d="M113 636h30M113 639.500h26" stroke="#ffe9f2" stroke-width="1.100"/>
<path d="M111 654.500h45M111 663.500h45" stroke="#1a1a1b" stroke-width="1.500"/>
<rect x="113" y="647.500" width="1.500" height="1.500" fill="#f0a020"/><rect x="113" y="656.500" width="1.500" height="1.500" fill="#f0a020"/><rect x="113" y="665.500" width="1.500" height="1.500" fill="#f0a020"/>
<path d="M116 648.300h22M116 657.300h24M116 666.300h22" stroke="#bdbdbd" stroke-width=".8"/>
<use href="#bugatti" x="94" y="676"/>
</g>
<!-- 49 -->
<g clip-path="url(#c49)"><use href="#techbg" x="36" y="706"/>
<ellipse cx="174" cy="745" rx="20" ry="28" fill="url(#glow)"/><ellipse cx="173" cy="746" rx="8" ry="15" fill="#fff1e2" opacity=".85"/><ellipse cx="171.500" cy="746" rx="8.500" ry="14" fill="none" stroke="#b9d8f2" stroke-width="1.300" opacity=".9"/>
<circle cx="115" cy="717.500" r="2.600" fill="#d8cbb8"/><circle cx="122" cy="718.500" r="3.400" fill="#e8dccb"/><circle cx="130.500" cy="719" r="3" fill="#f0b878"/><circle cx="139.500" cy="717.500" r="3.400" fill="#efe3c8"/>
<rect x="43" y="729" width="50.500" height="30" rx="1" fill="#2f2a20" stroke="#8f6c1e" stroke-width=".7"/>
<rect x="43" y="729" width="50.500" height="8.500" fill="url(#gold)"/>
<path d="M45 732h30M45 735h27" stroke="#f0e2b8" stroke-width=".8" opacity=".85"/>
</g>
</g>
</g>

<!-- slide -->
<g id="slidecontent">
<defs>
<linearGradient id="band" x1="324" y1="0" x2="1244" y2="0" gradientUnits="userSpaceOnUse">
<stop offset="0" stop-color="#03001c"/><stop offset=".04" stop-color="#030520"/><stop offset=".2" stop-color="#0a3f4b"/><stop offset=".5" stop-color="#158774"/><stop offset=".8" stop-color="#1cbf9c"/><stop offset="1" stop-color="#20dcb1"/>
</linearGradient>
<clipPath id="imgclip"><rect x="359" y="294.700" width="433" height="288"/></clipPath>
<linearGradient id="ul" x1="0" x2="1"><stop offset="0" stop-color="#1a8fe0"/><stop offset="1" stop-color="#c02fc9"/></linearGradient>
</defs>
<rect x="324" y="184" width="920" height="518" fill="#03001c"/>
<rect x="324" y="598" width="920" height="104" fill="url(#band)"/>
<!-- car icon -->
<g fill="#22d8af">
<path d="M384.500 238h21l1.200.700 4.300 9.500h-2.600l-3.600-8h-19.600l-3.600 8h-2.600l4.300-9.500z"/>
<path d="M376 246h4.500v2.200h-3.500a1 1 0 0 1-1-1z"/><path d="M414 246h-4.500v2.200h3.500a1 1 0 0 0 1-1z"/>
<path d="M379.500 248h31a3 3 0 0 1 2.700 2.500v10.500a1.500 1.500 0 0 1-1.500 1.500h-33.400a1.500 1.500 0 0 1-1.500-1.500v-10.500a3 3 0 0 1 2.700-2.500z"/>
<path d="M377 262h5.300v2.800a1.200 1.200 0 0 1-1.200 1.200h-2.900a1.200 1.200 0 0 1-1.200-1.200z"/><path d="M407.700 262h5.300v2.800a1.200 1.200 0 0 1-1.200 1.200h-2.900a1.200 1.200 0 0 1-1.200-1.200z"/>
</g>
<g fill="#03001c"><circle cx="383.700" cy="255.600" r="2.700"/><circle cx="406.300" cy="255.600" r="2.700"/>
<rect x="389.500" y="251.700" width="11" height="1.300"/><rect x="389.500" y="254" width="11" height="1.300"/><rect x="389.500" y="256.300" width="11" height="1.300"/><rect x="389.500" y="258.500" width="11" height="1"/>
<rect x="389.500" y="260.300" width="11" height="2.800"/></g>
<text x="430.300" y="262.500" textLength="86.400" lengthAdjust="spacingAndGlyphs" style="font-size:27px;font-weight:bold;fill:#fff;stroke:#fff;stroke-width:1.100px">CHAPITRE IV</text>
<!-- framed main image -->
<rect x="354" y="290" width="443" height="297.500" rx="2.500" fill="#21d8b0"/>
<rect x="359" y="294.700" width="433" height="288" fill="#fff"/>
<g clip-path="url(#imgclip)">
<!-- faint radar pentagons -->
<g fill="none" stroke="#f0f0f0" stroke-width="2" stroke-linejoin="round">
<path d="M575 312l134 108l-50 172h-168l-50-172z" stroke-width="2.500"/>
<path d="M575 345l108 88l-40 140h-136l-40-140z" fill="#f4f4f4"/>
<path d="M575 378l80 66l-30 104h-100l-30-104z"/>
<path d="M575 405l55 46l-21 72h-68l-21-72z"/>
<path d="M575 428l32 27l-12 42h-40l-12-42z"/>
</g>
<!-- connecting lines -->
<path d="M575 328.500L474 431L539.500 518L657.500 579" fill="none" stroke="#dedede" stroke-width="3.500" stroke-linejoin="round"/>
<path d="M575 328.500L657.500 440.500V579" fill="none" stroke="#dedede" stroke-width="3.500" stroke-linejoin="round"/>
<!-- sticky boxes -->
<rect x="345" y="402.500" width="74" height="44.500" rx="2" fill="#fff" stroke="#fcb4b7" stroke-width="1.200"/>
<rect x="380" y="410" width="28.500" height="11" fill="#fca6a8"/><rect x="352" y="419" width="20.500" height="11.500" fill="#fca6a8"/><rect x="380" y="428.500" width="28.500" height="11.500" fill="#fca6a8"/>
<path d="M385.500 415.500h17M385.500 434.200h17M361 424.700h7" stroke="#e89799" stroke-width="1.400"/>
<rect x="729.500" y="402" width="80" height="44.500" rx="2" fill="#fff" stroke="#bdef90" stroke-width="1.200"/>
<rect x="737.500" y="407.500" width="28.500" height="11.500" fill="#b6ec84"/><rect x="778" y="412" width="20" height="12" fill="#b6ec84"/><rect x="744" y="427" width="28.500" height="11.500" fill="#b6ec84"/>
<path d="M743 413.200h18M749.500 432.700h18M783 418h9" stroke="#a3d876" stroke-width="1.400"/>
<rect x="540.500" y="280" width="73" height="25.500" rx="2" fill="#fff" stroke="#fde27f" stroke-width="1.200"/>
<rect x="548" y="290" width="25" height="7" fill="#fde06e"/><rect x="582" y="290" width="27" height="13" fill="#fde06e"/>
<!-- circles -->
<circle cx="575" cy="328.500" r="10.800" fill="#fde06e"/>
<circle cx="474" cy="431" r="10.800" fill="#fca0a3"/>
<circle cx="657.500" cy="440.500" r="10.800" fill="#b6ec84"/>
<circle cx="539.500" cy="518" r="9.500" fill="#cfa8e6"/>
<circle cx="657.500" cy="579" r="10.800" fill="#8bd5fc"/>
<!-- big 5 -->
<path fill="#444" d="M531 341H621.500V367.700H561V386.500C568 381.500 578 379.900 588.700 379.900C612 379.900 625 393 625 420V436C625 463 608 477.600 577 477.600C545 477.600 527.700 465 527.700 440V432H561V440C561 451 565 455 573.500 455C582 455 586.500 451 586.500 440V421C586.500 411 582 406.500 573.500 406.500C566 406.500 561 410 561 416.500H531Z"/>
<path d="M572 331.500L533.500 370.600" stroke="#dcdcdc" stroke-width="3"/><circle cx="575" cy="328.500" r="10.800" fill="#fde06e"/>
<!-- FORCES -->
<g fill="#444" stroke="#fff" stroke-width="1.200" paint-order="stroke" fill-rule="evenodd">
<path d="M470.500 472H497.800V482.600H482.900V492.300H494.300V501H482.900V523.900H470.500Z"/>
<path d="M518.200 471.400C529 471.400 535.600 476 535.600 487V509C535.600 520 529 524.500 518.200 524.500C507.400 524.500 500.800 520 500.800 509V487C500.800 476 507.400 471.400 518.200 471.400ZM517.900 482.300C514.500 482.300 512.700 483.500 512.700 487V509C512.700 512.500 514.500 513.700 517.900 513.700C521.300 513.700 523 512.500 523 509V487C523 483.500 521.300 482.300 517.900 482.300Z"/>
<path d="M541.200 472H560.500C571 472 575.300 476 575.300 485V489.500C575.300 496 573 500 568 502L577.800 523.900H565L557 503.800H554V523.900H541.200ZM554 481.700V494H558.500C562.300 494 563.700 492.500 563.700 489.500V486.200C563.700 483.200 562.300 481.700 558.500 481.700Z"/>
<path d="M597.200 471.400C607.500 471.400 613.200 476 613.200 486.500V488.700H600.700V486C600.700 483.300 599.500 482.300 597.200 482.300C594.800 482.300 593.600 483.300 593.600 486V510C593.600 512.700 594.800 513.700 597.200 513.700C599.500 513.700 600.700 512.700 600.700 510V506.300H613.200V509.500C613.200 520 607.500 524.500 597.200 524.500C586.900 524.500 581.300 520 581.300 509.500V486.500C581.300 476 586.900 471.400 597.200 471.400Z"/>
<path d="M619 472H645.500V482.600H631.400V492H642V502H631.400V513.400H645.500V523.900H619Z"/>
</g>
<path d="M676.200 489.500V485.500C676.200 480 672.500 477.200 665.500 477.200C658.500 477.200 654.800 480 654.800 486C654.800 492 658 495 665.500 499.500C673 504 676.200 507 676.200 511.500C676.200 516.500 672.500 518.700 665.500 518.700C658.500 518.700 654.800 516 654.800 510V505.500" fill="none" stroke="#fff" stroke-width="12.700"/>
<path d="M676.200 489.500V485.500C676.200 480 672.500 477.200 665.500 477.200C658.500 477.200 654.800 480 654.800 486C654.800 492 658 495 665.500 499.500C673 504 676.200 507 676.200 511.500C676.200 516.500 672.500 518.700 665.500 518.700C658.500 518.700 654.800 516 654.800 510V505.500" fill="none" stroke="#444" stroke-width="11.500"/>
<!-- orange label -->
<rect x="458.500" y="528.800" width="233.500" height="43.500" fill="#fbb52c"/>
<path d="M551 525L657.500 579" stroke="#e6dccb" stroke-width="3.200"/>
<text x="467.500" y="560" textLength="214" lengthAdjust="spacing" style="font-size:29.500px;font-weight:bold;fill:#fff">Modèle de Porter</text>
</g>
<!-- bottom title & line -->
<path d="M577 628.700H1244" stroke="#fff" stroke-width="2"/>
<text x="376" y="633" textLength="180" lengthAdjust="spacingAndGlyphs" style="font-size:15px;font-weight:bold;fill:#fff">BUGATTI ET KOENIGSEEG</text>
<!-- ===== right cards ===== -->
<defs>
<clipPath id="c1clip"><rect x="3.2" y="3.2" width="192.0" height="166.2" rx="4.500" transform="translate(996.6,289.4) skewX(-16.436)"/></clipPath>
<clipPath id="c2clip"><rect x="3.2" y="3.2" width="188.6" height="183.8" rx="4.500" transform="translate(851,372.3) skewX(-16.436)"/></clipPath>
<clipPath id="c3clip"><rect x="3.2" y="3.2" width="218.1" height="213.2" rx="4.500" transform="translate(961,439.4) skewX(-16.436)"/></clipPath>
</defs>
<rect x="3.2" y="3.2" width="192.0" height="166.2" rx="6" transform="translate(996.6,289.4) skewX(-16.436)" fill="#fff" stroke="#21d8b0" stroke-width="6.4"/>
<g clip-path="url(#c1clip)">
<text x="1005.400" y="310.300" textLength="123.500" lengthAdjust="spacingAndGlyphs" style="font-size:10.200px;font-weight:bold;fill:#555">PORTER'S FIVE FORCES</text>
<rect x="1047" y="314.300" width="39.500" height="1.700" fill="url(#ul)"/>
<path d="M978.5 388.6A123 123 0 0 1 1062.3 351.1L1064.4 407.0A67 67 0 0 0 1018.8 427.5Z" fill="#0a9fd7" stroke="#0a9fd7" stroke-width="3" stroke-linejoin="round"/>
<path d="M1073.4 351.2A123 123 0 0 1 1147.7 381.2L1111.0 423.4A67 67 0 0 0 1070.5 407.1Z" fill="#fe9a0c" stroke="#fe9a0c" stroke-width="3" stroke-linejoin="round"/>
<path d="M1158.4 391.7A123 123 0 0 1 1190.0 474.0L1134.0 474.0A67 67 0 0 0 1116.8 429.2Z" fill="#0b1b5c" stroke="#0b1b5c" stroke-width="3" stroke-linejoin="round"/>
<path d="M1018 366.500Q1036 358 1057 355" fill="none" stroke="#cfeaf6" stroke-width="3" stroke-dasharray="2.500 1"/>
<path d="M1081 356.500Q1112 362 1138 383" fill="none" stroke="#ffe1b4" stroke-width="3" stroke-dasharray="2.500 1"/>
<g fill="#fff"><path d="M1086 382l7-3l3 2l5-2.500l6 3l7 10l-3 2l-6 6l-4 2l-9-9l-3 1z"/><path d="M1083 383l3.500-2l5 10l-3.500 2z"/><path d="M1111 379l3.500 1.500l-4.500 10.500l-3.500-1.500z"/></g>
<path d="M1093 386l6 2l4-2M1096 396l2 2M1099 394l2.500 2.500M1102 392l2.500 2.500" stroke="#fe9a0c" stroke-width="1" fill="none"/>
<g fill="#fff"><rect x="1037" y="392" width="13" height="11"/><rect x="1040" y="385" width="3" height="8"/><rect x="1046" y="383" width="3.500" height="10"/></g>
<path d="M1037 395h13M1037 398h13M1037 401h13M1041 392v11M1045 392v11" stroke="#0a9fd7" stroke-width=".7"/>
<circle cx="1146" cy="432" r="5" fill="none" stroke="#fff" stroke-width="1.500"/><path d="M1136 425l2.500 1.500M1135 433h3M1146 421v-2" stroke="#fff" stroke-width="1"/>
<text x="1034" y="438" textLength="65.500" lengthAdjust="spacingAndGlyphs" style="font-size:18px;font-weight:bold;fill:#444;stroke:#444;stroke-width:.6px">Competitive</text>
<path d="M1114 360c3-8 8-11 12-10c4 1 4 8 1 10c-3 1-4-4-2-9c3-6 8-11 15-14M1136 334.500l6.500 1l-2 6" fill="none" stroke="#666" stroke-width=".8"/>
<path d="M988 342c8 0 12 5 10 9c-2 4-10 5-13 2c-3-3 4-7 9-4c5 3 5 9 0 11c-4 2-8 1-9 0" fill="none" stroke="#666" stroke-width=".8"/>
<g style="font-size:5.200px;fill:#888"><text x="1145" y="328.500" style="font-size:5.200px;fill:#888">For example</text><text x="1145" y="335" style="font-size:5.200px;fill:#888">buyers dem</text><text x="1157" y="341.500" style="font-size:5.200px;fill:#888">discou</text></g>
</g>
<rect x="3.2" y="3.2" width="188.6" height="183.8" rx="6" transform="translate(851,372.3) skewX(-16.436)" fill="#fff" stroke="#21d8b0" stroke-width="6.4"/>
<g clip-path="url(#c2clip)">
<text x="873.500" y="398.300" textLength="93" lengthAdjust="spacingAndGlyphs" style="font-size:12.500px;fill:#222">Porter's five forces</text>
<path d="M830 409.500h220" stroke="#ececec" stroke-width="1"/>
<path d="M920.0 420.6A53 53 0 0 1 970.4 457.2L939.0 467.4A20 20 0 0 0 920.0 453.6Z" fill="#c3b694" stroke="#fff" stroke-width="1.600"/>
<path d="M970.4 457.2A53 53 0 0 1 951.2 516.5L931.8 489.8A20 20 0 0 0 939.0 467.4Z" fill="#47a5c5" stroke="#fff" stroke-width="1.600"/>
<path d="M951.2 516.5A53 53 0 0 1 888.8 516.5L908.2 489.8A20 20 0 0 0 931.8 489.8Z" fill="#76b83f" stroke="#fff" stroke-width="1.600"/>
<path d="M888.8 516.5A53 53 0 0 1 869.6 457.2L901.0 467.4A20 20 0 0 0 908.2 489.8Z" fill="#f1b516" stroke="#fff" stroke-width="1.600"/>
<path d="M869.6 457.2A53 53 0 0 1 920.0 420.6L920.0 453.6A20 20 0 0 0 901.0 467.4Z" fill="#dc9a98" stroke="#fff" stroke-width="1.600"/>
<circle cx="920" cy="473.6" r="23.500" fill="#fff"/><circle cx="920" cy="473.6" r="21.500" fill="#d8d8d8"/><circle cx="920" cy="473.6" r="20.500" fill="#0f6cbd"/>
<text x="905" y="472.500" textLength="30.500" lengthAdjust="spacingAndGlyphs" style="font-size:5.600px;fill:#fff;font-weight:bold">Porter's five</text>
<text x="912.500" y="480.300" textLength="15" lengthAdjust="spacingAndGlyphs" style="font-size:5.600px;fill:#fff;font-weight:bold">forces</text>
<path d="M890 447l7-8c2-2 4-2.500 5-2c.5 1 0 3-2 5l-8 7zM891 444l-3 0 2-3zM894.500 447.500l0 3 3-2z" fill="#fff"/>
<path d="M936 439.500h3l2 6.500h7l1.500-4.500h-9" fill="none" stroke="#fff" stroke-width="1.200"/><circle cx="942" cy="448.500" r="1" fill="#fff"/><circle cx="947" cy="448.500" r="1" fill="#fff"/><path d="M944 441l1.500 1.500 2.500-3" stroke="#fff" stroke-width="1" fill="none"/>
<path d="M879 485a5.500 5.500 0 0 1 9.500-3.500M890 489a5.500 5.500 0 0 1-9.500 3.500" fill="none" stroke="#fff" stroke-width="1.600"/><path d="M889.500 478v4.500h-4.500zM879.500 496v-4.500h4.500z" fill="#fff"/>
<path d="M919 508h9.500M919 512h9.500M919 516h9.500" stroke="#fff" stroke-width="1.800"/><path d="M916 507v10" stroke="#fff" stroke-width="1.200" stroke-dasharray="1 1"/>
<path d="M949 480c1.500-1 3-1 4 0M949.500 484h4" stroke="#fff" stroke-width="1.200" fill="none"/>
<rect x="806" y="424" width="70.5" height="22.5" rx="11.25" fill="#fff" stroke="#e2e2e2" stroke-width="1"/>
<text x="832" y="433.500" textLength="27" lengthAdjust="spacingAndGlyphs" style="font-size:5.800px;font-weight:bold;fill:#222">Threat of</text>
<text x="826" y="441.500" textLength="38.500" lengthAdjust="spacingAndGlyphs" style="font-size:5.800px;font-weight:bold;fill:#1b75bc">new entrants</text>
<rect x="964" y="424.5" width="60" height="22" rx="11.0" fill="#fff" stroke="#e2e2e2" stroke-width="1"/>
<text x="968.500" y="433.500" textLength="50" lengthAdjust="spacingAndGlyphs" style="font-size:5.800px;font-weight:bold;fill:#222">Bargaining power</text>
<text x="977" y="441.500" style="font-size:5.800px;font-weight:bold;fill:#222">of <tspan fill="#1b75bc">suppliers</tspan></text>
<rect x="817" y="501" width="59" height="21.5" rx="10.75" fill="#fff" stroke="#e2e2e2" stroke-width="1"/>
<text x="833" y="510" textLength="26.500" lengthAdjust="spacingAndGlyphs" style="font-size:5.800px;font-weight:bold;fill:#222">Threat of</text>
<text x="830.500" y="518.500" textLength="31.500" lengthAdjust="spacingAndGlyphs" style="font-size:5.800px;font-weight:bold;fill:#1b75bc">substitutes</text>
<rect x="894" y="529.5" width="62" height="21.5" rx="10.75" fill="#fff" stroke="#e2e2e2" stroke-width="1"/>
<text x="906" y="538.500" textLength="34" lengthAdjust="spacingAndGlyphs" style="font-size:5.800px;font-weight:bold;fill:#222">Competitive</text>
<text x="914.500" y="546.500" textLength="17.500" lengthAdjust="spacingAndGlyphs" style="font-size:5.800px;font-weight:bold;fill:#1b75bc">rivalry</text>
<path d="M803 550.500h8" stroke="#1b2f8f" stroke-width="1.800"/><path d="M812 550.500h9" stroke="#1b75bc" stroke-width="1.800"/><path d="M804 554.500h9" stroke="#f7941d" stroke-width="1.800"/><path d="M814 554.500h12" stroke="#e8452c" stroke-width="1.800"/>
<path d="M897 554.500h34" stroke="#9a7fd6" stroke-width="1"/>
</g>
<rect x="3.2" y="3.2" width="218.1" height="213.2" rx="6" transform="translate(961,439.4) skewX(-16.436)" fill="#eaf3fd" stroke="#21d8b0" stroke-width="6.4"/>
<g clip-path="url(#c3clip)">
<text x="983" y="460.700" textLength="113.500" lengthAdjust="spacingAndGlyphs" style="font-size:10.700px;font-weight:bold;fill:#222">PORTER'S FIVE FORCES</text>
<path d="M1041.7 471.3A88 88 0 0 1 1129.7 559.3L1086.1 559.3A44.4 44.4 0 0 0 1041.7 514.9Z" fill="#8ce9e6" />
<path d="M1129.7 559.3A88 88 0 0 1 1041.7 647.3L1041.7 603.7A44.4 44.4 0 0 0 1086.1 559.3Z" fill="#5bbad1" />
<path d="M1041.7 647.3A88 88 0 0 1 953.7 559.3L997.3 559.3A44.4 44.4 0 0 0 1041.7 603.7Z" fill="#4a8fb8" />
<path d="M953.7 559.3A88 88 0 0 1 1041.7 471.3L1041.7 514.9A44.4 44.4 0 0 0 997.3 559.3Z" fill="#3b6596" />
<text x="1013.500" y="549" textLength="56.500" lengthAdjust="spacingAndGlyphs" style="font-size:11px;fill:#222">Competitive</text>
<text x="1026" y="564" textLength="31" lengthAdjust="spacingAndGlyphs" style="font-size:11px;fill:#222">Rivalry</text>
<path d="M1031 587v-9h3v9M1036 587v-12h3v12M1041 587v-8h3v8M1046 587v-11h2.500v11M1030 587.500h20" fill="none" stroke="#6f86a8" stroke-width=".9"/><path d="M1031 577l5-5 4 3.500 5-4" fill="none" stroke="#69c6c9" stroke-width="1"/><circle cx="1047" cy="576" r="3.500" fill="#d6ecf6" stroke="#69c6c9" stroke-width="1"/><path d="M1049.500 579l3 5" stroke="#69c6c9" stroke-width="1.300"/>
<g><circle cx="980.500" cy="514" r="2.800" fill="#f1c7a5"/><path d="M975 527v-5c0-3 2-4.500 5.500-4.500s5 1.500 5 4.500v5z" fill="#1f2f6b"/><circle cx="1001" cy="514.500" r="2.800" fill="#f1c7a5"/><path d="M996 527.500v-5c0-3 2-4.500 5-4.500s5 1.500 5 4.500v5z" fill="#d83341"/><circle cx="990.500" cy="512.500" r="3.400" fill="#f5cfae"/><path d="M983.500 528v-6c0-3.500 2.500-5.500 7-5.500s7 2 7 5.500v6z" fill="#27407f"/><path d="M990.500 517v7" stroke="#d83341" stroke-width="1.200"/></g>
<g fill="none" stroke="#222" stroke-width="1"><path d="M1081 513.500l5-2 4 1.500 5-2 6 2.500 3 8-3 1.500-6 5-3 1-8-6-2 .5z" fill="#fff"/><path d="M1086 516l6 1 4-2M1089 524l2 2M1092 522.500l2 2M1095 521l2 2"/><path d="M1092 509v-4M1085 510l-2.500-3M1099 510l2.500-3M1086 529l-2 3M1098 529l2 3M1092 530v4"/></g>
<g stroke="#e8733a" stroke-width=".6"><rect x="1071.500" y="596" width="13" height="10" fill="#fb8d5b"/><rect x="1074" y="593.500" width="8" height="3" fill="#fca06f"/><rect x="1087" y="595" width="12" height="11" fill="#fb8d5b"/><rect x="1102" y="596.500" width="13" height="9.500" fill="#fb8d5b"/><path d="M1102 599l6.500-2 6.500 2" fill="#fdbb5c"/></g>
<g fill="none" stroke-width="1.300"><circle cx="982.500" cy="589" r="3.200" stroke="#a9d3ec"/><path d="M977.500 600v-3c0-2 1.500-3 5-3s5 1 5 3v3z" stroke="#a9d3ec"/><circle cx="996.500" cy="603" r="3.200" stroke="#f2c14e"/><path d="M991.500 614v-3c0-2 1.500-3 5-3s5 1 5 3v3z" stroke="#f2c14e"/><path d="M989 589c4 0 7 2 8 6M990 611c-4 0-7-2-8-6" stroke="#a9d3ec" stroke-width="1"/></g>
<text x="948" y="503" style="font-size:11px;fill:#222">try</text>
<text x="1122.500" y="503" textLength="44" lengthAdjust="spacingAndGlyphs" style="font-size:11px;fill:#222">Power of</text>
<text x="912.500" y="618.300" textLength="44" lengthAdjust="spacingAndGlyphs" style="font-size:11px;fill:#222">of Buyers</text>
<text x="1117" y="624.500" style="font-size:11px;fill:#222">Th</text>
<path d="M1168.500 450.500h4M1172.500 450.500v5h5M1172.500 455.500h-4.500M1177 450v10M1172.500 455.500v4.500h-4" fill="none" stroke="#e02a2a" stroke-width="1.500"/><path d="M1168 462.500h8" stroke="#3558b8" stroke-width="1.400"/>
</g>
</g>

<!-- status -->
<g id="status">
<text x="227" y="733" textLength="199" lengthAdjust="spacingAndGlyphs" style="font-size:14.500px;fill:#555">Cliquez pour ajouter des notes</text>
<text class="lbl" x="12" y="760" textLength="102" lengthAdjust="spacingAndGlyphs">Diapositive 46 de 86</text>
<!-- spellcheck icon -->
<path d="M140 751.500h-5.500v10h5.500zM140 751.500h5.500v4.500" fill="none" stroke="#444" stroke-width="1"/>
<path d="M141.500 757.500l5 5M146.500 757.500l-5 5" stroke="#444" stroke-width="1.100"/>
<text class="lbl" x="166" y="760" textLength="85" lengthAdjust="spacingAndGlyphs">Français (France)</text>
<!-- accessibility icon -->
<circle cx="287.500" cy="751" r="1.600" fill="none" stroke="#444" stroke-width="1"/>
<path d="M282 754.500l4 1h3l4-1M286 755.500v3l-2.500 4.500M289 755.500v3l1 1" fill="none" stroke="#444" stroke-width="1"/>
<path d="M289 758.500l4.500 4.500M293.500 758.500l-4.500 4.500" stroke="#444" stroke-width="1.100"/>
<text class="lbl" x="299" y="760" textLength="237" lengthAdjust="spacingAndGlyphs">Accessibilité : consultez nos recommandations</text>
<!-- notes -->
<path d="M829 755.500h16M829 758.500h16M829 761.500h16M833.500 752.500l3.500-3.500 3.500 3.500" fill="none" stroke="#444" stroke-width="1"/>
<text class="lbl" x="846.500" y="760.500" textLength="29.500" lengthAdjust="spacingAndGlyphs">Notes</text>
<path d="M896.500 749.500h13v9h-8l-3 3v-3h-2z" fill="none" stroke="#444" stroke-width="1" stroke-linejoin="round"/>
<text class="lbl" x="913.500" y="760.500" textLength="72" lengthAdjust="spacingAndGlyphs">Commentaires</text>
<!-- view buttons -->
<rect x="1005" y="746" width="40" height="21" fill="#dadada"/>
<rect x="1018.500" y="750.500" width="13" height="11" fill="none" stroke="#333" stroke-width="1.100"/>
<rect x="1021.500" y="753.500" width="7.500" height="5" fill="none" stroke="#333" stroke-width="1"/>
<path d="M1021.500 750.500v11" stroke="#333" stroke-width="1"/>
<path d="M1058.500 750.500h5v4h-5zM1066.500 750.500h5v4h-5zM1058.500 757.500h5v4h-5zM1066.500 757.500h5v4h-5z" fill="none" stroke="#333" stroke-width="1"/>
<path d="M1098.500 750.500c2-1 4-1 5.500.5c1.500-1.500 3.500-1.500 5.500-.5v10c-2-1-4-1-5.500.5c-1.500-1.500-3.500-1.500-5.500-.5zM1104 751v10" fill="none" stroke="#333" stroke-width="1"/>
<path d="M1100 753h2.500M1100 755h2.500M1100 757h2.500M1105.500 753h2.500M1105.500 755h2.500M1105.500 757h2.500" stroke="#333" stroke-width=".7"/>
<path d="M1137.500 749.500h13M1138.500 749.500v6h11v-6M1144 755.500v5.500M1141 761.500h6" fill="none" stroke="#333" stroke-width="1.100"/>
<!-- zoom -->
<path d="M1170.500 756.500h7" stroke="#333" stroke-width="1"/>
<path d="M1182 756.500h100" stroke="#666" stroke-width="1"/>
<path d="M1232.500 754.500v4" stroke="#666" stroke-width="1"/>
<rect x="1204.500" y="751" width="4.500" height="11" rx="1" fill="#555"/>
<path d="M1288 756.500h9M1292.500 752v9" stroke="#333" stroke-width="1"/>
<text class="lbl" x="1309.500" y="760.500" textLength="24.500" lengthAdjust="spacingAndGlyphs">48 %</text>
<rect x="1350.500" y="753.500" width="6" height="6" fill="none" stroke="#333" stroke-width="1"/>
<path d="M1351 751l2.500-2.500 2.500 2.500M1351 762l2.500 2.500 2.500-2.500M1348.500 754l-2.500 2.500 2.500 2.500M1358.500 754l2.500 2.500-2.500 2.500" fill="none" stroke="#333" stroke-width="1"/>
<!-- scrollbars arrows & thumbs -->
<path d="M198.500 190l4.500-5.500 4.500 5.500z" fill="#777"/>
<path d="M198.500 733l4.500 5.500 4.500-5.500z" fill="#777"/>
<rect x="199" y="460" width="9" height="34" rx="4.500" fill="#7a7a7a"/>
<path d="M1353 190l4.500-6 4.500 6z" fill="#777"/>
<path d="M1353 646l4.500 6 4.500-6z" fill="#777"/>
<rect x="1353" y="421.500" width="9" height="17.500" rx="4.500" fill="#7a7a7a"/>
<path d="M1353 665l4.500-5 4.500 5zM1353 670l4.500-5 4.500 5z" fill="#777"/>
<path d="M1353 676l4.500 5.500 4.500-5.500zM1353 681l4.500 5.500 4.500-5.500z" fill="#777"/>
</g>

</svg>
</body></html>
